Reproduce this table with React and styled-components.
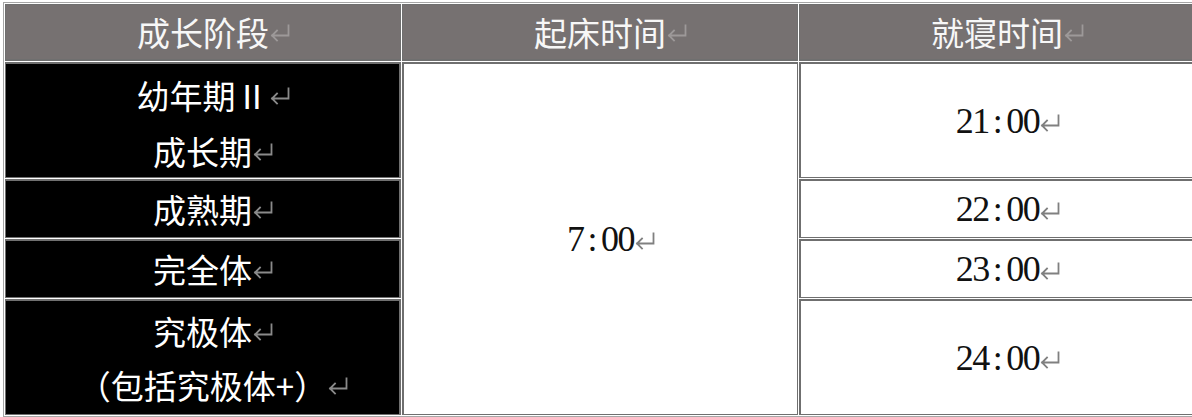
import React from 'react'
import styled, { createGlobalStyle } from 'styled-components'

const GlobalStyle = createGlobalStyle`
  html, body {
    margin: 0;
    padding: 0;
    background: #ffffff;
    overflow: hidden;
  }
`

const Table = styled.table`
  margin: 2px 0 0 3px;
  width: 1194px;
  table-layout: fixed;
  border-collapse: separate;
  border-spacing: 1px;
  border: 1px solid #a6a6a6;
  background: #ffffff;
`

const HeadCell = styled.th`
  box-sizing: border-box;
  width: 396px;
  height: 57px;
  padding: 0;
  border: 1px solid #6f6f6f;
  border-width: 1px 1px 2px 1px;
  background: #767171;
  color: #f7f7f7;
  font-family: "Noto Sans CJK SC", sans-serif;
  font-weight: 400;
  font-size: 33px;
  line-height: 40px;
  text-align: center;
  vertical-align: middle;
`

const StageCell = styled.td`
  box-sizing: border-box;
  height: ${props => props.$height}px;
  padding: 0;
  border: 1px solid #6f6f6f;
  border-top-width: 2px;
  border-right-width: 2px;
  background: #000000;
  color: #ffffff;
  font-family: "Noto Sans CJK SC", sans-serif;
  font-size: 33px;
  text-align: center;
  vertical-align: middle;
`

const Line = styled.div`
  line-height: ${props => props.$lh || 56}px;
  white-space: nowrap;
`

const TimeCell = styled.td`
  box-sizing: border-box;
  height: ${props => props.$height}px;
  padding: 0;
  border: 1px solid #6f6f6f;
  border-top-width: 2px;
  border-left-width: 2px;
  background: #ffffff;
  color: #111111;
  font-family: "Liberation Serif", "Times New Roman", serif;
  font-size: 36px;
  letter-spacing: -1.5px;
  text-align: center;
  vertical-align: middle;
  white-space: nowrap;
`

const Colon = styled.span`
  margin: 0 5px 0 4px;
`

const MarkSvg = styled.svg`
  width: 20px;
  height: 18px;
  margin-left: 1px;
  margin-right: -21px;
  vertical-align: ${props => props.$shift || 2}px;
  overflow: visible;
`

const Mark = ({ color = '#808080', shift }) => (
  <MarkSvg viewBox="0 0 20 18" $shift={shift}>
    <path
      d="M18.5 1.5 V11.5 H2 M7 6.5 L2 11.5 L7 16.5"
      fill="none"
      stroke={color}
      strokeWidth="1.8"
      strokeLinecap="square"
    />
  </MarkSvg>
)

const Time = ({ value }) => {
  const [h, m] = value.split(':')
  return (
    <>
      {h}<Colon>:</Colon>{m}<Mark shift={1} />
    </>
  )
}

const headerMark = '#9d9999'
const darkMark = '#8a8a8a'

const App = () => (
  <>
    <GlobalStyle />
    <Table>
      <thead>
        <tr>
          <HeadCell>成长阶段<Mark color={headerMark} shift={4} /></HeadCell>
          <HeadCell>起床时间<Mark color={headerMark} shift={4} /></HeadCell>
          <HeadCell>就寝时间<Mark color={headerMark} shift={4} /></HeadCell>
        </tr>
      </thead>
      <tbody>
        <tr>
          <StageCell $height={116}>
            <Line $lh={60}>幼年期Ⅱ<Mark color={darkMark} shift={4} /></Line>
            <Line $lh={52}>成长期<Mark color={darkMark} shift={4} /></Line>
          </StageCell>
          <TimeCell rowSpan={4}>
            <Time value="7:00" />
          </TimeCell>
          <TimeCell $height={116}>
            <Time value="21:00" />
          </TimeCell>
        </tr>
        <tr>
          <StageCell $height={59}>
            <Line>成熟期<Mark color={darkMark} shift={4} /></Line>
          </StageCell>
          <TimeCell $height={59}>
            <Time value="22:00" />
          </TimeCell>
        </tr>
        <tr>
          <StageCell $height={59}>
            <Line>完全体<Mark color={darkMark} shift={4} /></Line>
          </StageCell>
          <TimeCell $height={59}>
            <Time value="23:00" />
          </TimeCell>
        </tr>
        <tr>
          <StageCell $height={116}>
            <Line $lh={54}>究极体<Mark color={darkMark} shift={4} /></Line>
            <Line $lh={54}>（包括究极体+）<Mark color={darkMark} shift={4} /></Line>
          </StageCell>
          <TimeCell $height={116}>
            <Time value="24:00" />
          </TimeCell>
        </tr>
      </tbody>
    </Table>
  </>
)

export default App
